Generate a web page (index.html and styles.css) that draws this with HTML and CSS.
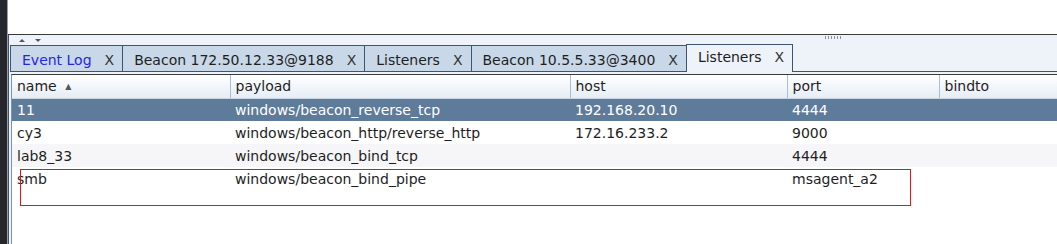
FILE: index.html
```html
<!DOCTYPE html>
<html lang="en">
<head>
  <meta charset="UTF-8" />
  <title>Listeners</title>
  <link rel="stylesheet" href="styles.css">
</head>
<body>
  <div class="app">
    <div class="sidebar"></div>
    <div class="main">
      <div class="top"></div>
      <div class="pane">
        <div class="split-bar">
          <span class="arrow up"></span>
          <span class="arrow down"></span>
          <span class="grip"></span>
        </div>
        <div class="tabs">
          <div class="tab"><span class="tab-title event">Event Log</span><span class="close">X</span></div>
          <div class="tab"><span class="tab-title">Beacon 172.50.12.33@9188</span><span class="close">X</span></div>
          <div class="tab"><span class="tab-title">Listeners</span><span class="close">X</span></div>
          <div class="tab"><span class="tab-title">Beacon 10.5.5.33@3400</span><span class="close">X</span></div>
          <div class="tab active"><span class="tab-title">Listeners</span><span class="close">X</span></div>
          <div class="tab-fill"></div>
        </div>
        <div class="table-wrap">
          <table class="listeners">
            <colgroup>
              <col class="c-name"><col class="c-payload"><col class="c-host"><col class="c-port"><col>
            </colgroup>
            <thead>
              <tr>
                <th>name <span class="sort">&#9650;</span></th>
                <th>payload</th>
                <th>host</th>
                <th>port</th>
                <th>bindto</th>
              </tr>
            </thead>
            <tbody>
              <tr class="selected">
                <td>11</td><td>windows/beacon_reverse_tcp</td><td>192.168.20.10</td><td>4444</td><td></td>
              </tr>
              <tr>
                <td>cy3</td><td>windows/beacon_http/reverse_http</td><td>172.16.233.2</td><td>9000</td><td></td>
              </tr>
              <tr class="alt">
                <td>lab8_33</td><td>windows/beacon_bind_tcp</td><td></td><td>4444</td><td></td>
              </tr>
              <tr>
                <td>smb</td><td>windows/beacon_bind_pipe</td><td></td><td>msagent_a2</td><td></td>
              </tr>
            </tbody>
          </table>
          <div class="highlight"></div>
        </div>
      </div>
    </div>
  </div>
</body>
</html>
```

FILE: styles.css
```css
:root {
  --pane-bg: #eef2f9;
  --tab-bg: #c8d8e8;
  --tab-border: #3d5570;
  --selected: #5f7b9a;
}

* {
  box-sizing: border-box;
}

body {
  margin: 0;
  font-family: "DejaVu Sans", sans-serif;
  font-size: 14px;
  color: #1e1e1e;
  background: white;
}

.app {
  display: flex;
  height: 244px;
  overflow: hidden;
}

.sidebar {
  width: 8px;
  background: #25272c;
  border-right: 1px solid #9a9ea6;
}

.main {
  flex: 1;
  display: flex;
  flex-direction: column;
}

.top {
  height: 35px;
  background: white;
  border-bottom: 1px solid #3b3b3b;
}

.pane {
  flex: 1;
  background: var(--pane-bg);
  padding-left: 1px;
  border-left: 1px solid #3d5570;
}

.split-bar {
  height: 10px;
  display: flex;
  align-items: center;
  position: relative;
}

.arrow {
  width: 0;
  height: 0;
  border-left: 3px solid transparent;
  border-right: 3px solid transparent;
}

.arrow.up {
  margin-left: 9px;
  border-bottom: 3px solid #555;
}

.arrow.down {
  margin-left: 10px;
  border-top: 3px solid #555;
}

.grip {
  position: absolute;
  left: 814px;
  top: 1px;
  width: 18px;
  height: 3px;
  background-image: radial-gradient(circle, #8a8f98 0.7px, transparent 0.8px);
  background-size: 3px 2px;
}

.tabs {
  display: flex;
  height: 27px;
  align-items: stretch;
}

.tab {
  display: flex;
  align-items: center;
  padding: 3px 8px 0 11px;
  background: var(--tab-bg);
  border: 1px solid var(--tab-border);
  border-right: none;
  white-space: nowrap;
}

.tab-title {
  margin-right: 13px;
}

.tab-title.event {
  color: #2525e6;
}

.close {
  color: #333;
}

.tab.active {
  background: var(--pane-bg);
  border-right: 1px solid var(--tab-border);
  border-bottom: none;
  margin-top: -1px;
  padding-top: 0;
  padding-bottom: 3px;
}

.tab-fill {
  flex: 1;
  border-bottom: 1px solid var(--tab-border);
}

.table-wrap {
  position: relative;
  margin: 2px 0 0 1px;
  height: 170px;
  background: white;
  border-top: 1px solid #3a3a3a;
  border-left: 1px solid #7d93ad;
}

.listeners {
  width: 100%;
  border-collapse: collapse;
  table-layout: fixed;
}

.c-name { width: 218px; }
.c-payload { width: 340px; }
.c-host { width: 217px; }
.c-port { width: 152px; }

.listeners th {
  height: 23px;
  padding: 0 5px;
  text-align: left;
  font-weight: normal;
  background: linear-gradient(#ffffff, #e6edf6);
  border-left: 1px solid #a9bdd4;
  border-bottom: 1px solid #c9d4e2;
}

.listeners th:first-child {
  border-left: none;
}

.sort {
  font-size: 8px;
  color: #555;
  margin-left: 4px;
  vertical-align: 2px;
}

.listeners td {
  height: 23px;
  padding: 0 5px;
  white-space: nowrap;
  overflow: hidden;
}

.listeners tr.selected td {
  background: var(--selected);
  color: white;
}

.listeners tr.alt td {
  background: #f6f6f8;
}

.highlight {
  position: absolute;
  left: 8px;
  top: 94px;
  width: 891px;
  height: 37px;
  border: 1.5px solid #ee1111;
}
```
